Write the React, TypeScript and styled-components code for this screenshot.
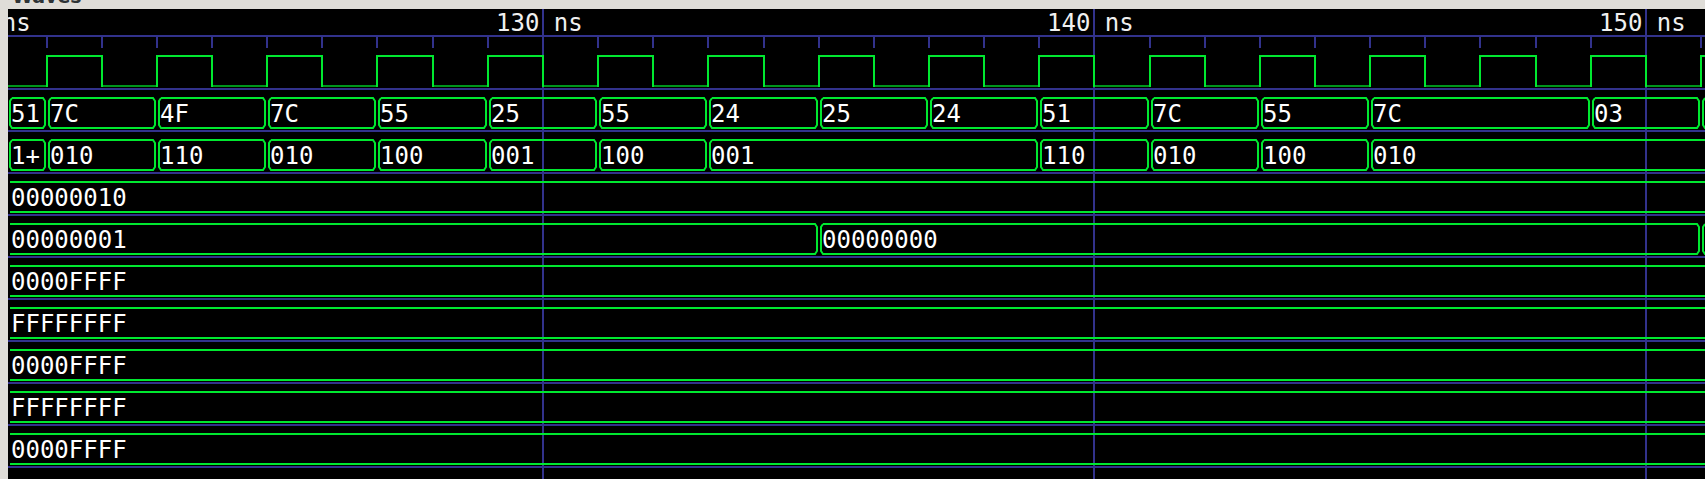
import React from "react";
import styled, { createGlobalStyle } from "styled-components";

const BLUE = "#32328c";
const GREEN = "#00e830";
const DARK_GREEN = "#00961c";
const PANEL = "#dfddd8";

const WIDTH = 1697;
const X130 = 534.9;
const PX_PER_NS = 55.15;
const TOP = 8;
const BOT = 38;

const tx = (t: number) => Math.round(X130 + (t - 130) * PX_PER_NS);

type Change = [number, string];

interface ITrace {
  start: string;
  bracket?: boolean;
  changes?: Change[];
}

const traces: ITrace[] = [
  {
    start: "51",
    bracket: true,
    changes: [
      [121, "7C"],
      [123, "4F"],
      [125, "7C"],
      [127, "55"],
      [129, "25"],
      [131, "55"],
      [133, "24"],
      [135, "25"],
      [137, "24"],
      [139, "51"],
      [141, "7C"],
      [143, "55"],
      [145, "7C"],
      [149, "03"],
      [151, ""],
    ],
  },
  {
    start: "1+",
    bracket: true,
    changes: [
      [121, "010"],
      [123, "110"],
      [125, "010"],
      [127, "100"],
      [129, "001"],
      [131, "100"],
      [133, "001"],
      [139, "110"],
      [141, "010"],
      [143, "100"],
      [145, "010"],
    ],
  },
  { start: "00000010" },
  {
    start: "00000001",
    changes: [
      [135, "00000000"],
      [151, ""],
    ],
  },
  { start: "0000FFFF" },
  { start: "FFFFFFFF" },
  { start: "0000FFFF" },
  { start: "FFFFFFFF" },
  { start: "0000FFFF" },
];

const GlobalStyle = createGlobalStyle`
  html, body {
    margin: 0;
    padding: 0;
    background: ${PANEL};
  }
`;

function segPath(a: number, b: number, openL: boolean, openR: boolean) {
  const la = openL ? a : a + 4;
  const rb = openR ? b : b - 4;
  let d = `M${la} ${TOP} H${rb}`;
  if (!openR) d += ` L${b - 2} ${TOP + 3} V${BOT - 3} L${b - 4} ${BOT}`;
  else d += ` M${b} ${BOT}`;
  d += ` H${la}`;
  if (!openL) d += ` L${a + 2} ${BOT - 3} V${TOP + 3} L${a + 4} ${TOP}`;
  return d;
}

function ClockTrace() {
  let low = `M0 ${BOT} H${tx(121)}`;
  let high = "";
  let edges = "";
  for (let t = 121; t <= 151; t++) {
    const x1 = tx(t);
    const x2 = tx(t + 1);
    edges += ` M${x1} ${TOP} V${BOT}`;
    if (t % 2 === 1) high += ` M${x1} ${TOP} H${x2}`;
    else low += ` M${x1} ${BOT} H${x2}`;
  }
  return (
    <TraceRow>
      <svg width={WIDTH} height={40}>
        <path d={low} stroke={DARK_GREEN} strokeWidth={2} fill="none" />
        <path d={high + edges} stroke={GREEN} strokeWidth={2} fill="none" strokeLinecap="square" />
      </svg>
    </TraceRow>
  );
}

function BusTrace({ start, bracket = false, changes = [] }: ITrace) {
  const bounds = [bracket ? 0 : 2, ...changes.map(([t]) => tx(t))];
  const labels = [start, ...changes.map(([, v]) => v)];
  const end = WIDTH + 20;

  return (
    <TraceRow>
      <svg width={WIDTH} height={40}>
        {bounds.map((a, i) => {
          const last = i === bounds.length - 1;
          const b = last ? end : bounds[i + 1];
          const d = segPath(a, b, i === 0 && !bracket, last);
          return (
            <g key={i}>
              <path d={d} stroke={GREEN} strokeWidth={2} fill="none" />
              {labels[i] && <ValueText x={i === 0 ? 3 : a + 3} y={32}>{labels[i]}</ValueText>}
            </g>
          );
        })}
      </svg>
    </TraceRow>
  );
}

function Ruler() {
  const ticks: number[] = [];
  for (let t = 120; t <= 152; t++) ticks.push(tx(t));
  return (
    <RulerBar>
      <svg width={WIDTH} height={39}>
        {[120, 130, 140, 150].map((t) => (
          <RulerText key={t} x={tx(t) - 47} y={22}>{`${t} ns`}</RulerText>
        ))}
        <rect x={0} y={26} width={WIDTH} height={2} fill={BLUE} />
        {ticks.map((x) => (
          <rect key={x} x={x - 1} y={28} width={2} height={11} fill={BLUE} />
        ))}
      </svg>
    </RulerBar>
  );
}

export default function App() {
  return (
    <>
      <GlobalStyle />
      <Window>
        <TitleBar>
          <Title>Waves</Title>
        </TitleBar>
        <Body>
          <Gutter />
          <Canvas>
            {[130, 140, 150].map((t) => (
              <Marker key={t} $x={tx(t)} />
            ))}
            <Ruler />
            <TraceList>
              <ClockTrace />
              {traces.map((tr, i) => (
                <BusTrace key={i} {...tr} />
              ))}
            </TraceList>
          </Canvas>
        </Body>
      </Window>
    </>
  );
}

const Window = styled.div`
  width: 1705px;
  height: 479px;
  display: flex;
  flex-direction: column;
  overflow: hidden;
  background: ${PANEL};
`;

const TitleBar = styled.div`
  height: 9px;
  overflow: hidden;
  padding-left: 12px;
  background: ${PANEL};
`;

const Title = styled.div`
  margin-top: -14px;
  font-family: "DejaVu Sans", sans-serif;
  font-size: 19px;
  font-weight: 700;
  line-height: 20px;
  color: #2e3436;
`;

const Body = styled.div`
  flex: 1;
  display: flex;
  min-height: 0;
`;

const Gutter = styled.div`
  width: 8px;
  background: ${PANEL};
`;

const Canvas = styled.div`
  position: relative;
  flex: 1;
  overflow: hidden;
  background: #000;
`;

const Marker = styled.div<{ $x: number }>`
  position: absolute;
  top: 0;
  bottom: 0;
  left: ${(p) => p.$x - 1}px;
  width: 2px;
  background: ${BLUE};
  z-index: 0;
`;

const RulerBar = styled.div`
  position: relative;
  z-index: 1;
  height: 39px;
  svg {
    display: block;
  }
`;

const TraceList = styled.div`
  position: relative;
  z-index: 1;
  display: flex;
  flex-direction: column;
`;

const TraceRow = styled.div`
  height: 40px;
  border-bottom: 2px solid ${BLUE};
  svg {
    display: block;
    overflow: visible;
  }
`;

const ValueText = styled.text`
  font-family: "DejaVu Sans Mono", monospace;
  font-size: 24px;
  fill: #ffffff;
`;

const RulerText = styled.text`
  font-family: "DejaVu Sans Mono", monospace;
  font-size: 24px;
  fill: #f0f0f0;
`;
